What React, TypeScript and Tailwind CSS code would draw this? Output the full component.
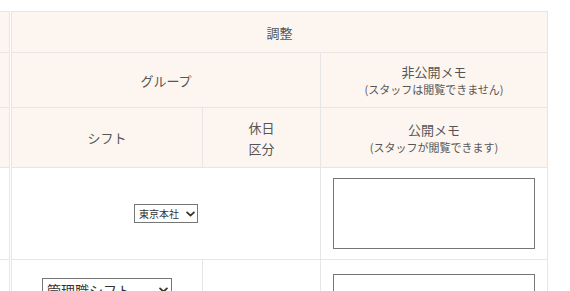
import React from "react";

const font = { fontFamily: '"Noto Sans CJK JP", "Noto Sans", sans-serif' };

function Chevron({ className }: { className: string }) {
  return (
    <svg
      className={className}
      viewBox="0 0 10 6"
      fill="none"
      stroke="#3d3226"
      strokeWidth="2"
      strokeLinecap="round"
      strokeLinejoin="round"
    >
      <path d="M1.2 1.2 L5 4.8 L8.8 1.2" />
    </svg>
  );
}

export default function App() {
  const hd = "bg-[#fdf5ef] border-l border-t border-[#e6e6e6] flex flex-col items-center justify-center text-center";
  return (
    <div className="w-[570px] h-[291px] overflow-hidden bg-white text-[#555555] text-[13px]" style={font}>
      <div className="flex pt-[11px]">
        {/* frozen left column */}
        <div className="w-[10px] shrink-0 grid grid-cols-[9px] grid-rows-[41px_55px_60px_92px_120px] border-r border-[#e6e6e6]">
          <div className="bg-[#fdf5ef] border-t border-[#e6e6e6]" />
          <div className="bg-[#fdf5ef] border-t border-[#e6e6e6]" />
          <div className="bg-[#fdf5ef] border-t border-[#e6e6e6]" />
          <div className="bg-white border-t border-[#e6e6e6]" />
          <div className="bg-white border-t border-[#e6e6e6]" />
        </div>
        <div className="w-[1px] shrink-0" />
        {/* main table */}
        <div className="w-[537px] shrink-0 grid grid-cols-[191px_118px_227px] grid-rows-[41px_55px_60px_92px_120px] border-r border-[#e6e6e6]">
          <div className={`${hd} col-span-3`}>
            <span className="leading-[21px]">調整</span>
          </div>
          <div className={`${hd} col-span-2`}>
            <span className="leading-[21px]">グループ</span>
          </div>
          <div className={hd}>
            <span className="leading-[19px]">非公開メモ</span>
            <span className="text-[11px] leading-[17px]">(スタッフは閲覧できません)</span>
          </div>
          <div className={hd}>
            <span className="leading-[21px]">シフト</span>
          </div>
          <div className={hd}>
            <span className="leading-[21px]">休日</span>
            <span className="leading-[21px]">区分</span>
          </div>
          <div className={hd}>
            <span className="leading-[19px]">公開メモ</span>
            <span className="text-[11px] leading-[17px]">(スタッフが閲覧できます)</span>
          </div>

          {/* body row 1 */}
          <div className="col-span-2 border-l border-t border-[#e6e6e6] flex items-center justify-center">
            <div className="relative w-[64px] h-[19px]">
              <select
                className="appearance-none block w-full h-full border border-[#767676] bg-white text-[10px] text-[#333333] pl-[4px] pr-[14px] leading-[17px]"
                style={font}
                defaultValue="tokyo"
              >
                <option value="tokyo">東京本社</option>
              </select>
              <Chevron className="absolute right-[3px] top-[7px] w-[9px] h-[6px] pointer-events-none" />
            </div>
          </div>
          <div className="border-l border-t border-[#e6e6e6] px-[12px] pt-[10px]">
            <textarea className="block w-full h-[71px] border border-[#767676] bg-white resize-none" />
          </div>

          {/* body row 2 */}
          <div className="border-l border-t border-[#e6e6e6] flex justify-center pt-[18px]">
            <div className="relative w-[130px] h-[24px]">
              <select
                className="appearance-none block w-full h-full border border-[#767676] bg-white text-[14px] text-[#333333] pl-[4px] pr-[16px] leading-[22px]"
                style={font}
                defaultValue="kanri"
              >
                <option value="kanri">管理職シフト</option>
              </select>
              <Chevron className="absolute right-[4px] top-[9px] w-[9px] h-[6px] pointer-events-none" />
            </div>
          </div>
          <div className="border-l border-t border-[#e6e6e6]" />
          <div className="border-l border-t border-[#e6e6e6] px-[12px] pt-[14px]">
            <textarea className="block w-full h-[71px] border border-[#767676] bg-white resize-none" />
          </div>
        </div>
      </div>
    </div>
  );
}
